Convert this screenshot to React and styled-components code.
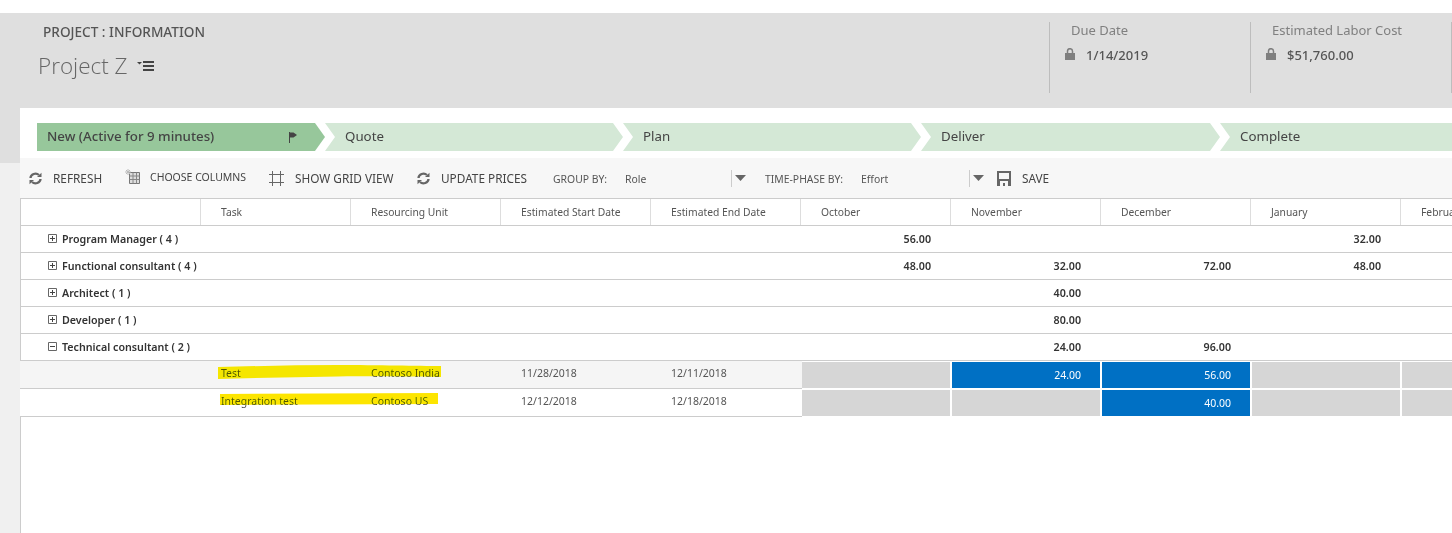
import React from 'react';
import styled, { createGlobalStyle } from 'styled-components';

const Global = createGlobalStyle`
  html, body { margin: 0; padding: 0; background: #fff; }
  body { font-family: "Noto Sans", "Open Sans", sans-serif; color: #444; }
`;

const stages = [
  { label: 'New (Active for 9 minutes)', width: 288, active: true },
  { label: 'Quote', width: 298 },
  { label: 'Plan', width: 298 },
  { label: 'Deliver', width: 299 },
  { label: 'Complete', width: 300 },
];

const columns = ['', 'Task', 'Resourcing Unit', 'Estimated Start Date', 'Estimated End Date', 'October', 'November', 'December', 'January', 'February'];

const groups = [
  { name: 'Program Manager ( 4 )', values: [56, null, null, 32] },
  { name: 'Functional consultant ( 4 )', values: [48, 32, 72, 48] },
  { name: 'Architect ( 1 )', values: [null, 40, null, null] },
  { name: 'Developer ( 1 )', values: [null, 80, null, null] },
  { name: 'Technical consultant ( 2 )', values: [null, 24, 96, null], open: true },
];

const tasks = [
  {
    task: 'Test', unit: 'Contoso India', start: '11/28/2018', end: '12/11/2018', cells: [null, 24, 56, null, null], shade: true,
    marker: 'M0 2C40 1 80 0 120 0C160 0 200 1 223 1V12C190 12 150 11 120 11.500C80 12 40 13 0 14Z', left: 198, color: '#f9e600',
  },
  {
    task: 'Integration test', unit: 'Contoso US', start: '12/12/2018', end: '12/18/2018', cells: [null, null, 40, null, null],
    marker: 'M0 1L218 0V11L0 12Z', left: 200, color: '#fde500',
  },
];

const Refresh = () => (
  <svg width="13" height="13" viewBox="0 0 13 13" fill="none" stroke="#666" strokeWidth="2.300">
    <path d="M1.500 6A5 4.500 0 0 1 10 3" />
    <path d="M11.500 7A5 4.500 0 0 1 3 10" />
    <path d="M8 5h4.500V.8z" fill="#666" stroke="none" />
    <path d="M5 8H.5v4.200z" fill="#666" stroke="none" />
  </svg>
);

const Columns = () => (
  <svg width="16" height="16" viewBox="0 0 16 16" fill="none">
    <path d="M4.500 3.500h10v11h-10z" fill="#ddd" stroke="#777" />
    <path d="M4.500 7h10M4.500 10.500h10M8 3.500v11M11.500 3.500v11" stroke="#888" />
    <path d="M3 0v6M0 3h6M1 1l4 4M5 1L1 5" stroke="#bbb" />
  </svg>
);

const GridIcon = () => (
  <svg width="15" height="16" viewBox="0 0 15 16" fill="none" stroke="#666">
    <path d="M0 4.500h15M0 12.500h15M3.500 1v15M11.500 1v15" />
  </svg>
);

const Disk = () => (
  <svg width="14" height="15" viewBox="0 0 14 15">
    <path fillRule="evenodd" fill="#666" d="M0 0h14v15H0zM2 2v6h10V2zM3 10v5h8v-5z" />
    <path fill="#666" d="M6 12h2v3H6z" />
  </svg>
);

const Lock = () => (
  <svg width="10" height="12" viewBox="0 0 10 12">
    <path fill="#7f7f7f" d="M0 5h10v7H0z" />
    <path fill="none" stroke="#7f7f7f" strokeWidth="1.500" d="M2.500 5V3.200a2.500 2.500 0 0 1 5 0V5" />
  </svg>
);

const Flag = () => (
  <svg width="9" height="11" viewBox="0 0 9 11">
    <path fill="none" stroke="#444" d="M.5 0v11" />
    <path fill="#444" d="M1 .5h3.500L8 3 4.500 5.500H1z" />
  </svg>
);

const MenuIcon = () => (
  <svg width="17" height="11" viewBox="0 0 17 11" fill="#444">
    <path d="M0 1h5L2.500 3.500z" />
    <path d="M6 0h11v2H6zM6 4h11v2H6zM6 8h11v2H6z" />
  </svg>
);

const Expander = ({ open }) => (
  <svg width="9" height="9" viewBox="0 0 9 9" fill="none" stroke="#444">
    <path d="M.5.500h8v8h-8z" stroke="#666" />
    <path d={open ? 'M2 4.500h5' : 'M2 4.500h5M4.500 2v5'} />
  </svg>
);

const Caret = () => (
  <svg width="11" height="6" viewBox="0 0 11 6"><path fill="#666" d="M0 0h11L5.500 6z" /></svg>
);

function App() {
  return (
    <>
      <Global />
      <Page>
        <Header>
          <TitleBlock>
            <Entity>PROJECT : INFORMATION</Entity>
            <Name>Project Z <MenuIcon /></Name>
          </TitleBlock>
          <Fact>
            <FactLabel>Due Date</FactLabel>
            <FactValue><Lock />1/14/2019</FactValue>
          </Fact>
          <Fact>
            <FactLabel>Estimated Labor Cost</FactLabel>
            <FactValue><Lock />$51,760.00</FactValue>
          </Fact>
          <Fact />
        </Header>
        <Body>
          <Gutter />
          <Main>
            <Stages>
              {stages.map((s) => (
                <Stage key={s.label} $active={s.active} $width={s.width}>
                  <span>{s.label}</span>
                  {s.active && <Flag />}
                </Stage>
              ))}
            </Stages>
            <Toolbar>
              <ToolButton $width={96}><Refresh />REFRESH</ToolButton>
              <ToolButton $width={144} $small><Columns />CHOOSE COLUMNS</ToolButton>
              <ToolButton $width={148}><GridIcon />SHOW GRID VIEW</ToolButton>
              <ToolButton $width={136}><Refresh />UPDATE PRICES</ToolButton>
              <Picker $width={178} $label={72}>
                <span>GROUP BY:</span><b>Role</b>
              </Picker>
              <PickerCaret $width={34}><Caret /></PickerCaret>
              <Picker $width={204} $label={96}>
                <span>TIME-PHASE BY:</span><b>Effort</b>
              </Picker>
              <PickerCaret $width={28}><Caret /></PickerCaret>
              <ToolButton><Disk />SAVE</ToolButton>
            </Toolbar>
            <Grid>
              <HeaderRow>
                {columns.map((c) => <HeaderCell key={c}>{c}</HeaderCell>)}
              </HeaderRow>
              {groups.map((g) => (
                <GroupRow key={g.name}>
                  <GroupName><Expander open={g.open} />{g.name}</GroupName>
                  {g.values.map((v, i) => <Amount key={i}>{v ? v.toFixed(2) : ''}</Amount>)}
                  <Amount />
                </GroupRow>
              ))}
              {tasks.map((t) => (
                <TaskRow key={t.task}>
                  <TaskCell $shade={t.shade} />
                  <TaskCell $shade={t.shade}>{t.task}</TaskCell>
                  <TaskCell $shade={t.shade}>{t.unit}</TaskCell>
                  <TaskCell $shade={t.shade}>{t.start}</TaskCell>
                  <TaskCell $shade={t.shade}>{t.end}</TaskCell>
                  {t.cells.map((v, i) => <Slot key={i} $on={v !== null}>{v !== null ? v.toFixed(2) : ''}</Slot>)}
                  <Marker $left={t.left} width="224" height="15" viewBox="0 0 224 15">
                    <path d={t.marker} fill={t.color} />
                  </Marker>
                </TaskRow>
              ))}
            </Grid>
          </Main>
        </Body>
      </Page>
    </>
  );
}

const Page = styled.div`
  width: 1452px;
  height: 533px;
  overflow: hidden;
  padding-top: 13px;
  box-sizing: border-box;
`;

const Header = styled.header`
  height: 95px;
  background: #dfdfdf;
  display: flex;
`;

const TitleBlock = styled.div`
  width: 1049px;
  flex: none;
  padding: 10px 0 0 38px;
  box-sizing: border-box;
`;

const Entity = styled.div`
  margin-left: 5px;
  font-size: 13.600px;
  font-weight: 500;
  line-height: 18px;
  color: #555;
`;

const Name = styled.div`
  margin-top: 10px;
  font-family: "Open Sans", "Noto Sans", sans-serif;
  font-size: 22.500px;
  font-weight: 300;
  line-height: 30px;
  color: #666;
  display: flex;
  align-items: center;
  gap: 9px;
  svg { margin-top: 1px; }
`;

const Fact = styled.div`
  width: 201px;
  flex: none;
  height: 71px;
  margin-top: 9px;
  border-left: 1px solid #bdbdbd;
  padding-left: 21px;
  box-sizing: border-box;
`;

const FactLabel = styled.div`
  font-size: 13px;
  line-height: 16px;
  color: #808080;
`;

const FactValue = styled.div`
  margin: 8px 0 0 -6px;
  font-size: 13px;
  font-weight: 500;
  line-height: 18px;
  color: #555;
  display: flex;
  align-items: center;
  gap: 11px;
  svg { margin-top: -3px; }
`;

const Body = styled.div`
  display: flex;
  height: 425px;
`;

const Gutter = styled.div`
  width: 20px;
  flex: none;
  background: linear-gradient(#dfdfdf 55px, #f0f0f0 55px);
`;

const Main = styled.main`
  flex: 1;
  min-width: 0;
  overflow: hidden;
  background: #fff;
  padding-top: 15px;
  display: flex;
  flex-direction: column;
`;

const Stages = styled.div`
  display: flex;
  padding-left: 17px;
  height: 28px;
  flex: none;
`;

const Stage = styled.div`
  width: ${(p) => p.$width}px;
  flex: none;
  height: 28px;
  padding: 0 27px 2px ${(p) => (p.$active ? 10 : 20)}px;
  box-sizing: border-box;
  display: flex;
  align-items: center;
  justify-content: space-between;
  font-size: 13.300px;
  font-weight: ${(p) => (p.$active ? 500 : 400)};
  color: #444;
  background: ${(p) => (p.$active ? '#97c79b' : '#d4e8d6')};
  clip-path: polygon(
    0 0,
    calc(100% - 10px) 0,
    100% 50%,
    calc(100% - 10px) 100%,
    0 100%,
    ${(p) => (p.$active ? '0 100%' : '10px 50%')}
  );
  svg { margin-top: 2px; }
`;

const Toolbar = styled.div`
  margin-top: 7px;
  height: 40px;
  flex: none;
  background: #f7f7f7;
  display: flex;
  align-items: center;
  padding-left: 9px;
`;

const ToolButton = styled.div`
  ${(p) => (p.$width ? `width: ${p.$width}px;` : '')}
  flex: none;
  display: flex;
  align-items: center;
  gap: ${(p) => (p.$small ? 9 : 11)}px;
  font-size: ${(p) => (p.$small ? 10.500 : 11.800)}px;
  color: #444;
  white-space: nowrap;
  ${(p) => (p.$small ? 'margin-top: -3px;' : '')}
  svg { flex: none; }
`;

const Picker = styled.div`
  width: ${(p) => p.$width}px;
  flex: none;
  display: flex;
  padding-top: 2px;
  box-sizing: border-box;
  font-size: 10.400px;
  color: #555;
  white-space: nowrap;
  span { width: ${(p) => p.$label}px; flex: none; }
  b { font-weight: 400; }
`;

const PickerCaret = styled.div`
  width: ${(p) => p.$width}px;
  height: 17px;
  flex: none;
  padding-left: 3px;
  box-sizing: border-box;
  border-left: 1px solid #ccc;
  display: flex;
  align-items: center;
`;

const Grid = styled.div`
  width: 1500px;
  flex: 1;
  border-left: 1px solid #ccc;
  font-size: 10.500px;
`;

const Row = styled.div`
  display: grid;
  grid-template-columns: 181px repeat(9, 150px);
  margin-left: -1px;
  height: 27px;
  box-sizing: border-box;
  border-bottom: 1px solid #ccc;
`;

const HeaderRow = styled(Row)`
  height: 28px;
  border-top: 1px solid #ccc;
`;

const HeaderCell = styled.div`
  padding-left: 20px;
  border-right: 1px solid #ddd;
  font-size: 10.300px;
  color: #555;
  display: flex;
  align-items: center;
  white-space: nowrap;
`;

const GroupRow = styled(Row)`
  grid-template-columns: 780px repeat(5, 150px);
  padding-bottom: 1px;
  font-size: 10.700px;
  font-weight: 600;
  color: #333;
  align-items: center;
`;

const GroupName = styled.div`
  padding-left: 28px;
  display: flex;
  align-items: center;
  gap: 5px;
`;

const Amount = styled.div`
  padding-right: 19px;
  text-align: right;
`;

const TaskRow = styled.div`
  position: relative;
  display: grid;
  grid-template-columns: 181px 150px 150px 150px 151px repeat(5, 150px);
  margin-left: -1px;
  height: 28px;
`;

const TaskCell = styled.div`
  padding: 0 0 3px 20px;
  box-sizing: border-box;
  display: flex;
  align-items: center;
  color: #555;
  white-space: nowrap;
  background: ${(p) => (p.$shade ? '#f5f5f5' : '#fff')};
  border-bottom: 1px solid #ccc;
`;

const Slot = styled.div`
  background: ${(p) => (p.$on ? '#0070c4' : '#d6d6d6')};
  color: #fff;
  margin: 1px 2px 1px 0;
  text-align: right;
  padding-right: 19px;
  line-height: 26px;
`;

const Marker = styled.svg`
  position: absolute;
  left: ${(p) => p.$left}px;
  top: 4px;
  mix-blend-mode: darken;
`;

export default App;
